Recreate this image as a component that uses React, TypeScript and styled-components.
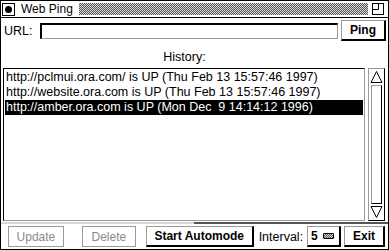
import styled, { createGlobalStyle } from 'styled-components';

const GlobalStyle = createGlobalStyle`
  html, body {
    margin: 0;
    padding: 0;
    background: #fff;
  }
  body {
    font-family: 'Liberation Sans', Arial, sans-serif;
    font-size: 12px;
    color: #000;
  }
`;

const stipple = 'repeating-conic-gradient(#555 0 25%, #d8d8d8 0 50%) 0 0 / 2px 2px';
const light = '#9a9a9a';

const Window = styled.div`
  width: 389px;
  height: 250px;
  box-sizing: border-box;
  border: 1px solid #000;
  display: flex;
  flex-direction: column;
  background: #fff;
  overflow: hidden;
`;

const TitleBar = styled.div`
  height: 16px;
  border-bottom: 1px solid #000;
  display: flex;
  align-items: center;
  padding: 0 3px 0 1px;
`;

const CloseBox = styled.div`
  width: 13px;
  height: 13px;
  box-sizing: border-box;
  border: 1px solid #000;
  display: flex;
  align-items: center;
  justify-content: center;
  &::after {
    content: '';
    width: 7px;
    height: 7px;
    border-radius: 50%;
    background: #000;
  }
`;

const Title = styled.span`
  margin-left: 6px;
  font-size: 12px;
  line-height: 14px;
`;

const TitleFill = styled.div`
  flex: 1;
  height: 12px;
  margin: 0 3px 0 6px;
  background: ${stipple};
`;

const Body = styled.div`
  flex: 1;
  display: flex;
  flex-direction: column;
  min-height: 0;
`;

const UrlRow = styled.div`
  height: 23px;
  display: flex;
  align-items: center;
  padding: 1px 2px 0 3px;
`;

const Label = styled.span<{ $ml?: number }>`
  font-size: 12.5px;
  margin-left: ${(p) => p.$ml ?? 0}px;
  white-space: nowrap;
`;

const UrlInput = styled.div`
  flex: 1;
  height: 16px;
  margin: 0 3px 0 8px;
  box-sizing: border-box;
  border-style: solid;
  border-width: 2px 1px 1px 2px;
  border-color: #000 ${light} ${light} #000;
  background: #fff;
`;

const Button = styled.div<{ $w: number; $ml?: number; $disabled?: boolean }>`
  width: ${(p) => p.$w}px;
  margin-left: ${(p) => p.$ml ?? 0}px;
  height: 21px;
  box-sizing: border-box;
  display: flex;
  align-items: center;
  justify-content: center;
  font-weight: ${(p) => (p.$disabled ? 'normal' : 'bold')};
  font-size: 12px;
  color: ${(p) => (p.$disabled ? '#8a8a8a' : '#000')};
  border-style: solid;
  border-width: ${(p) => (p.$disabled ? '1px' : '1px 2px 2px 1px')};
  border-color: ${(p) =>
    p.$disabled ? light : `${light} #000 #000 ${light}`};
  background: #fff;
  white-space: nowrap;
`;

const HistoryLabel = styled.div`
  padding: 8px 20px 4px 0;
  line-height: 14px;
  text-align: center;
  font-size: 12.5px;
`;

const ListRow = styled.div`
  flex: 1;
  display: flex;
  padding: 0 3px 1px 2px;
  min-height: 0;
`;

const ListBox = styled.div`
  flex: 1;
  border: 1px solid #000;
  border-right-color: ${light};
  border-bottom-color: ${light};
  padding: 1px;
`;

const ListItem = styled.div<{ $selected?: boolean }>`
  height: 15px;
  line-height: 15px;
  padding-left: 1px;
  font-size: 12.5px;
  white-space: nowrap;
  background: ${(p) => (p.$selected ? '#000' : 'transparent')};
  color: ${(p) => (p.$selected ? '#fff' : '#000')};
`;

const Scrollbar = styled.div`
  width: 17px;
  margin-left: 3px;
  box-sizing: border-box;
  border-style: solid;
  border-width: 1px;
  border-color: ${light} #000 #000 ${light};
  display: flex;
  flex-direction: column;
  align-items: center;
  padding: 1px 0;
`;

const Trough = styled.div`
  flex: 1;
  width: 11px;
  box-sizing: border-box;
  border-style: solid;
  border-width: 1px;
  border-color: ${light} #000 #000 ${light};
  margin: 1px 0;
`;

const BottomBar = styled.div`
  display: flex;
  align-items: center;
  border-top: 2px solid transparent;
  border-image: repeating-conic-gradient(#555 0 25%, #d8d8d8 0 50%) 2;
  padding: 2px 3px 2px 6px;
`;

const Spin = styled.div`
  width: 34px;
  height: 21px;
  margin-left: 4px;
  box-sizing: border-box;
  border-style: solid;
  border-width: 1px 2px 2px 1px;
  border-color: ${light} #000 #000 ${light};
  display: flex;
  align-items: center;
  padding-left: 3px;
  gap: 5px;
  font-weight: bold;
  font-size: 12px;
`;

const SpinMark = styled.div`
  width: 9px;
  height: 4px;
  border: 1px solid #000;
  border-radius: 1px;
  background: ${stipple};
`;

const Arrow = ({ down }: { down?: boolean }) => (
  <svg width="13" height="14" viewBox="0 0 13 14">
    <path
      d={down ? 'M1 1.5 H12 L6.5 12.5 Z' : 'M6.5 1.5 L12 12.5 H1 Z'}
      fill="#fff"
      stroke="#000"
      strokeWidth="1"
    />
  </svg>
);

const MaxIcon = () => (
  <svg width="14" height="14" viewBox="0 0 14 14">
    <rect x="1.5" y="1.5" width="11" height="11" fill="#fff" stroke="#000" />
    <path d="M1.5 7.5 H7.5 V1.5" fill="none" stroke="#000" />
  </svg>
);

const history = [
  'http://pclmui.ora.com/ is UP (Thu Feb 13 15:57:46 1997)',
  'http://website.ora.com is UP (Thu Feb 13 15:57:46 1997)',
  'http://amber.ora.com is UP (Mon Dec\u00a0 9 14:14:12 1996)',
];

export default function App() {
  return (
    <>
      <GlobalStyle />
      <Window>
        <TitleBar>
          <CloseBox />
          <Title>Web Ping</Title>
          <TitleFill />
          <MaxIcon />
        </TitleBar>
        <Body>
          <UrlRow>
            <Label>URL:</Label>
            <UrlInput />
            <Button $w={45}>Ping</Button>
          </UrlRow>
          <HistoryLabel>History:</HistoryLabel>
          <ListRow>
            <ListBox>
              {history.map((line, i) => (
                <ListItem key={line} $selected={i === 2}>
                  {line}
                </ListItem>
              ))}
            </ListBox>
            <Scrollbar>
              <Arrow />
              <Trough />
              <Arrow down />
            </Scrollbar>
          </ListRow>
          <BottomBar>
            <Button $w={56} $ml={1} $disabled>
              Update
            </Button>
            <Button $w={54} $ml={18} $disabled>
              Delete
            </Button>
            <Button $w={108} $ml={10}>
              Start Automode
            </Button>
            <Label $ml={5}>Interval:</Label>
            <Spin>
              5<SpinMark />
            </Spin>
            <Button $w={41} $ml={3}>
              Exit
            </Button>
          </BottomBar>
        </Body>
      </Window>
    </>
  );
}
